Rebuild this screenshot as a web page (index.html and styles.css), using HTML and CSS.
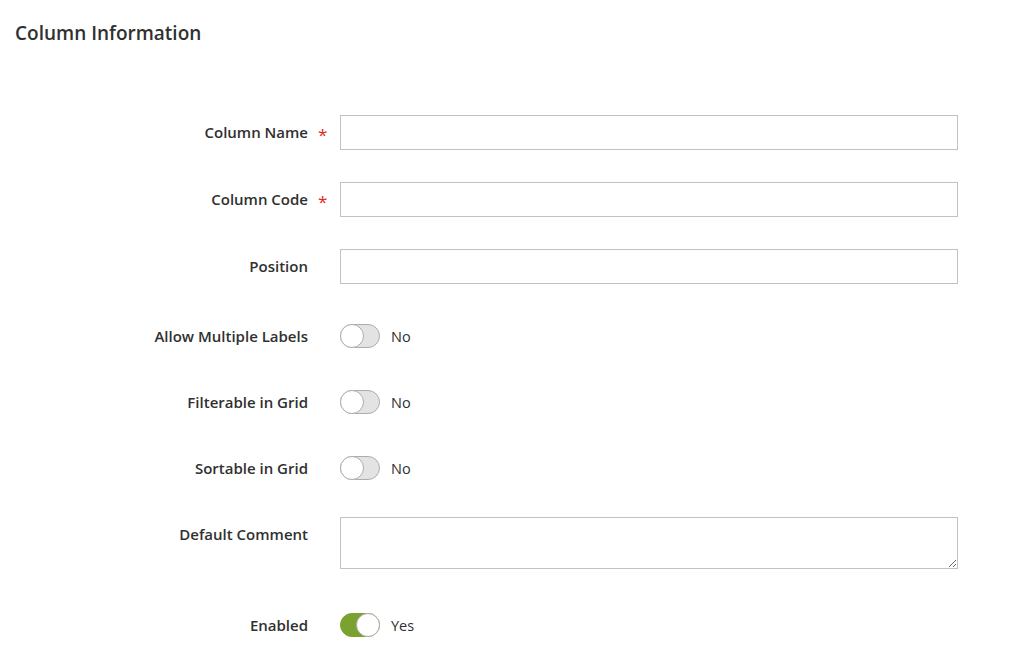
FILE: index.html
```html
<!DOCTYPE html>
<html lang="en">
  <head>
    <meta charset="UTF-8" />
    <meta name="viewport" content="width=device-width, initial-scale=1.0" />
    <title>Column Information</title>
    <link rel="stylesheet" href="styles.css">
  </head>
  <body>
    <div class="page">
      <h2 class="title">Column Information</h2>

      <form class="form">
        <!-- text fields -->
        <div class="field">
          <label class="label">Column Name</label>
          <span class="req">*</span>
          <div class="control"><input class="input" type="text" /></div>
        </div>
        <div class="field">
          <label class="label">Column Code</label>
          <span class="req">*</span>
          <div class="control"><input class="input" type="text" /></div>
        </div>
        <div class="field">
          <label class="label">Position</label>
          <span class="req"></span>
          <div class="control"><input class="input" type="text" /></div>
        </div>

        <!-- switches -->
        <div class="field field-switch first-switch">
          <label class="label">Allow Multiple Labels</label>
          <span class="req"></span>
          <div class="control">
            <span class="switch"><span class="knob"></span></span>
            <span class="switch-text">No</span>
          </div>
        </div>
        <div class="field field-switch">
          <label class="label">Filterable in Grid</label>
          <span class="req"></span>
          <div class="control">
            <span class="switch"><span class="knob"></span></span>
            <span class="switch-text">No</span>
          </div>
        </div>
        <div class="field field-switch">
          <label class="label">Sortable in Grid</label>
          <span class="req"></span>
          <div class="control">
            <span class="switch"><span class="knob"></span></span>
            <span class="switch-text">No</span>
          </div>
        </div>

        <!-- textarea -->
        <div class="field field-area">
          <label class="label">Default Comment</label>
          <span class="req"></span>
          <div class="control"><textarea class="textarea"></textarea></div>
        </div>

        <div class="field field-switch last-switch">
          <label class="label">Enabled</label>
          <span class="req"></span>
          <div class="control">
            <span class="switch on"><span class="knob"></span></span>
            <span class="switch-text">Yes</span>
          </div>
        </div>
      </form>
    </div>
  </body>
</html>
```

FILE: styles.css
```css
* {
  margin: 0;
  padding: 0;
  box-sizing: border-box;
}
body {
  background-color: #fff;
  color: #303030;
  font-family: "Open Sans", "Liberation Sans", sans-serif;
  font-size: 14px;
}
.page {
  padding: 20px 0 0 15px;
}
.title {
  font-size: 19px;
  font-weight: 600;
  line-height: 26px;
  color: #303030;
}
.form {
  margin-top: 69px;
  width: 958px;
  margin-left: -15px;
}
.field {
  display: flex;
  align-items: flex-start;
  margin-bottom: 32px;
}
.label {
  width: 308px;
  text-align: right;
  font-size: 15px;
  font-weight: 600;
  line-height: 35px;
}
.req {
  width: 32px;
  padding-left: 10px;
  color: #e22626;
  font-size: 17px;
  line-height: 39px;
  height: 35px;
}
.control {
  flex: 1;
  display: flex;
  align-items: center;
  min-height: 35px;
}
.input {
  width: 100%;
  height: 35px;
  border: 1px solid #c2c2c2;
  font-family: inherit;
  font-size: 14px;
  padding: 0 10px;
  outline: none;
}
.textarea {
  width: 100%;
  height: 52px;
  border: 1px solid #c2c2c2;
  font-family: inherit;
  font-size: 14px;
  padding: 6px 10px;
  outline: none;
  resize: vertical;
}

/* switch */
.field-switch .label {
  line-height: 34px;
}
.field-switch .req {
  height: 34px;
}
.field-switch .control {
  min-height: 34px;
}
.first-switch {
  padding-top: 3px;
}
.last-switch {
  padding-top: 7px;
}
.switch {
  position: relative;
  display: inline-block;
  width: 40px;
  height: 24px;
  border: 1px solid #adadad;
  border-radius: 12px;
  background-color: #e3e3e3;
}
.knob {
  position: absolute;
  top: -1px;
  left: -1px;
  width: 24px;
  height: 24px;
  border: 1px solid #adadad;
  border-radius: 50%;
  background-color: #fff;
}
.switch.on {
  background-color: #79a22e;
  border-color: #79a22e;
}
.switch.on .knob {
  left: auto;
  right: -1px;
}
.switch-text {
  margin-left: 11px;
  font-size: 14.5px;
}
```
